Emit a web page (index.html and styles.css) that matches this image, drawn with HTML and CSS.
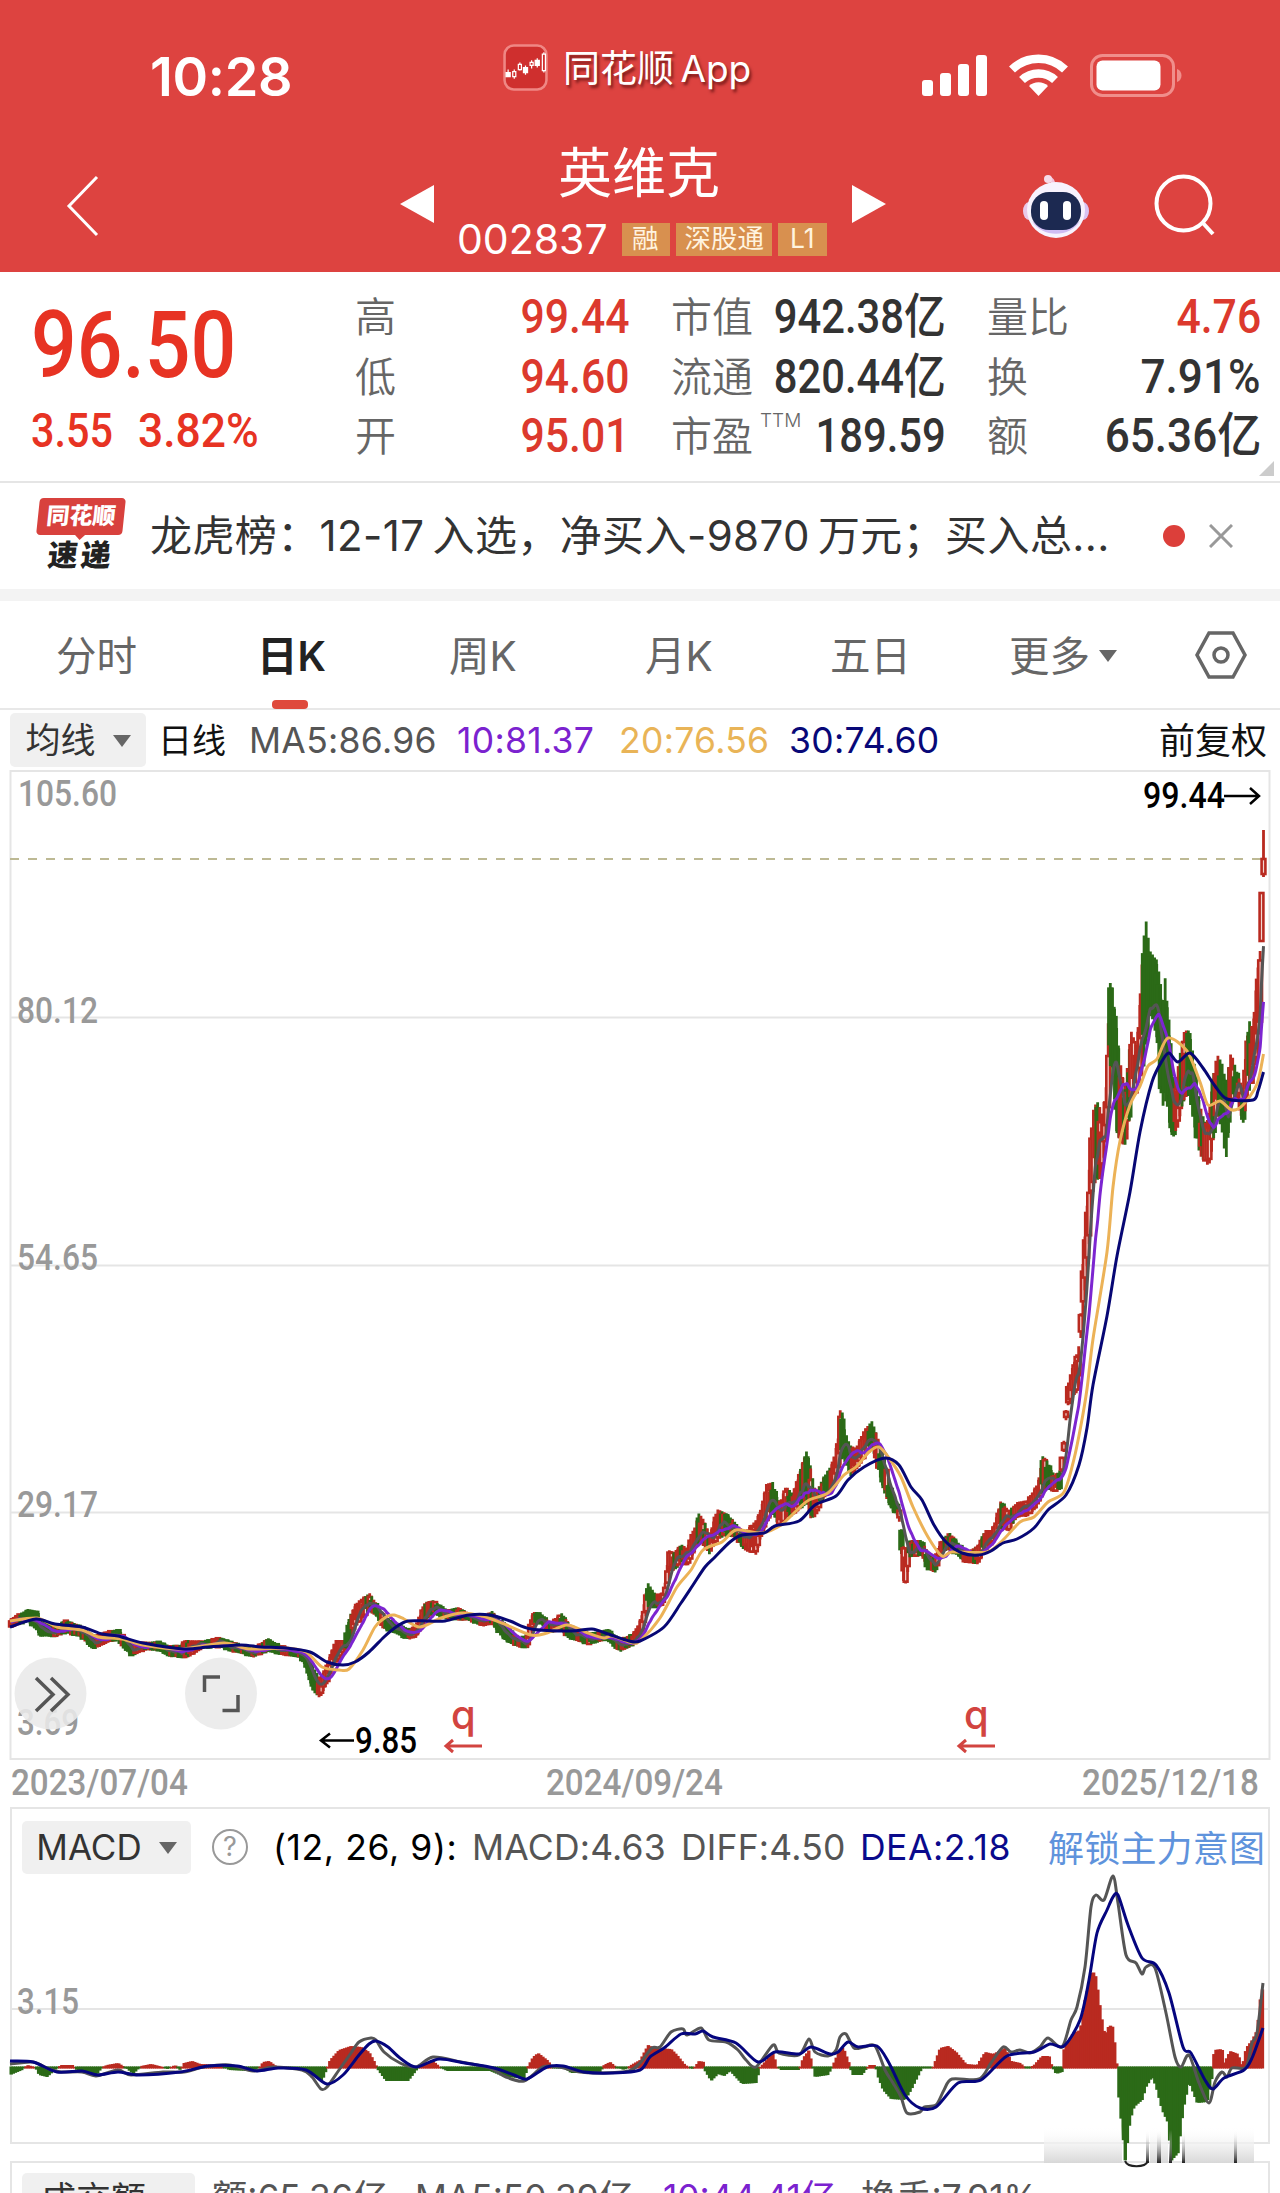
FILE: index.html
```html
<!DOCTYPE html>
<html lang="zh-CN">
<head>
  <meta charset="UTF-8">
  <title>英维克 002837</title>
  <link rel="stylesheet" href="styles.css">
</head>
<body>
  <header class="header">
    <div class="statusbar">
      <div class="time">10:28</div>
      <div class="app">
        <svg class="app-icon" viewBox="0 0 44 46">
          <rect x="1.5" y="1.5" width="41" height="43" rx="9" fill="#cf2f2e" stroke="#ef8784" stroke-width="2.5"/>
          <g stroke="#fff" stroke-width="1.2">
            <path d="M5 25v7M11 25v9M16.500 18v8M22 21v9M28 16v8M33.500 14v9M40 8v20"/>
            <path fill="#fff" d="M3 28h4v4h-4zM20 23h4v5h-4zM31.500 16h4v5h-4z"/>
            <path fill="#cf2f2e" d="M9.500 27h3v5h-3zM15 20h3v5h-3zM26.500 18h3v3h-3zM38.500 10h3v16h-3z"/>
          </g>
        </svg>
        <span>同花顺 App</span>
      </div>
      <svg class="phone-icons" viewBox="0 0 262 46" fill="#fff">
        <rect x="0" y="26" width="11" height="16" rx="3"/>
        <rect x="18" y="19" width="11" height="23" rx="3"/>
        <rect x="36" y="10" width="11" height="32" rx="3"/>
        <rect x="54" y="1" width="11" height="41" rx="3"/>
        <g fill="none" stroke="#fff" stroke-width="8.500">
          <path d="M90 15.500a38 38 0 0 1 53 0"/>
          <path d="M100 26a24 24 0 0 1 33 0"/>
        </g>
        <path d="M107 32a14 14 0 0 1 19 0l-9.500 10z"/>
        <rect x="169.500" y="1.500" width="82" height="40" rx="11" fill="none" stroke="#f08e8b" stroke-width="3"/>
        <rect x="174.500" y="6.500" width="64" height="30" rx="6"/>
        <path d="M255 15c6 2 6 11 0 13z" fill="#f08e8b"/>
      </svg>
    </div>
    <div class="nav">
      <svg class="back" viewBox="0 0 34 62"><path d="M31 2 3 31 31 60" fill="none" stroke="#fff" stroke-width="3"/></svg>
      <svg class="prev" viewBox="0 0 34 38"><path d="M34 0v38L0 19z" fill="#fff"/></svg>
      <div class="stock">
        <div class="name">英维克</div>
        <div class="code"><b>002837</b><i>融</i><i>深股通</i><i>L1</i></div>
      </div>
      <svg class="next" viewBox="0 0 34 38"><path d="M0 0v38L34 19z" fill="#fff"/></svg>
      <svg class="robot" viewBox="0 0 66 64">
        <path d="M30 12C31 5 26 4 25 5" fill="none" stroke="#f3c3dc" stroke-width="4"/>
        <circle cx="25" cy="5" r="4" fill="#f6dbe9"/>
        <ellipse cx="6" cy="37" rx="6" ry="9" fill="#e9c9ea"/>
        <ellipse cx="60" cy="37" rx="6" ry="9" fill="#d9c2f2"/>
        <ellipse cx="33" cy="36" rx="29" ry="28" fill="#f7f2fd"/>
        <path d="M9 47c10 17 38 17 48 0-10 10-38 10-48 0z" fill="#cfbcf3"/>
        <rect x="8" y="18" width="50" height="38" rx="18" fill="#1c2951"/>
        <rect x="17" y="27" width="8" height="19" rx="4" fill="#fff"/>
        <rect x="40" y="27" width="8" height="19" rx="4" fill="#fff"/>
      </svg>
      <svg class="search" viewBox="0 0 62 62" fill="none" stroke="#fff" stroke-width="4">
        <circle cx="29.500" cy="29.500" r="27"/><path d="m48 48 11 12"/>
      </svg>
    </div>
  </header>

  <section class="quote">
    <div class="price">
      <div class="last din">96.50</div>
      <div class="change"><span class="din">3.55</span><span class="din">3.82%</span></div>
    </div>
    <dl class="facts facts-a">
      <dt>高</dt><dd class="up"><span class="din">99.44</span></dd>
      <dt>低</dt><dd class="up"><span class="din">94.60</span></dd>
      <dt>开</dt><dd class="up"><span class="din">95.01</span></dd>
    </dl>
    <dl class="facts facts-b">
      <dt>市值</dt><dd><span class="din long">942.38亿</span></dd>
      <dt>流通</dt><dd><span class="din long">820.44亿</span></dd>
      <dt>市盈<sup>TTM</sup></dt><dd><span class="din long">189.59</span></dd>
    </dl>
    <dl class="facts facts-c">
      <dt>量比</dt><dd class="up"><span class="din">4.76</span></dd>
      <dt>换</dt><dd><span class="din wide">7.91%</span></dd>
      <dt>额</dt><dd><span class="din wide">65.36亿</span></dd>
    </dl>
    <span class="corner"></span>
  </section>

  <section class="news">
    <div class="news-logo"><span class="logo-top">同花顺</span><span class="logo-bottom">速递</span></div>
    <p>龙虎榜：<span>12-17</span>&thinsp;入选，净买入<span>-9870</span>&thinsp;万元；买入总...</p>
    <span class="dot"></span>
    <svg class="close" viewBox="0 0 24 24"><path d="m1 1 22 22M23 1 1 23" stroke="#999" stroke-width="3"/></svg>
  </section>

  <nav class="tabs">
    <span>分时</span>
    <span class="active">日K</span>
    <span>周K</span>
    <span>月K</span>
    <span>五日</span>
    <span>更多<i class="caret"></i></span>
    <svg class="gear" viewBox="0 0 52 48" fill="none" stroke="#666" stroke-width="3.500">
      <path d="M14 2h24l12 22-12 22H14L2 24z"/><circle cx="26" cy="24" r="7"/>
    </svg>
  </nav>

  <div class="ma-row">
    <button>均线<i class="caret"></i></button>
    <span class="cjk">日线</span>
    <span class="ma5">MA5:86.96</span>
    <span class="ma10">10:81.37</span>
    <span class="ma20">20:76.56</span>
    <span class="ma30">30:74.60</span>
    <span class="cjk adjust">前复权</span>
  </div>

  <svg class="kline" viewBox="0 770 1280 991">
    <g class="grid">
      <rect x="10.500" y="771" width="1259" height="988"/>
      <path d="M11 1017.500h1258M11 1265.500h1258M11 1512.500h1258"/>
    </g>
    <path class="last-line" d="M10 859h1260"/>
    <g class="axis">
      <text x="18" y="806" textLength="99" lengthAdjust="spacingAndGlyphs">105.60</text>
      <text x="17" y="1023" textLength="81" lengthAdjust="spacingAndGlyphs">80.12</text>
      <text x="17" y="1270" textLength="81" lengthAdjust="spacingAndGlyphs">54.65</text>
      <text x="17" y="1517" textLength="81" lengthAdjust="spacingAndGlyphs">29.17</text>
      <text x="17" y="1735" textLength="62" lengthAdjust="spacingAndGlyphs">3.69</text>
    </g>
    <g id="candles"></g>
    <g class="extreme">
      <text x="1143" y="808" textLength="82" lengthAdjust="spacingAndGlyphs">99.44</text>
      <text x="355" y="1753" textLength="62" lengthAdjust="spacingAndGlyphs">9.85</text>
      <path d="M1224 796h35m-9-8 9 8-9 8M354 1740.500h-33m9-7-9 7 9 7"/>
    </g>
    <g class="event">
      <text x="451" y="1729">q</text>
      <text x="964" y="1729">q</text>
      <path d="M482 1746h-36m7-6-7 6 7 6M995 1746h-36m7-6-7 6 7 6"/>
    </g>
    <g class="tool">
      <circle cx="50.500" cy="1693.500" r="36"/>
      <circle cx="221" cy="1693.500" r="36"/>
      <path d="m36 1678 17 16.500-17 16.500M51 1678l17 16.500-17 16.500M204.500 1692v-15H220M238 1695v15.500h-15.500"/>
    </g>
  </svg>

  <div class="dates"><span class="din">2023/07/04</span><span class="din">2024/09/24</span><span class="din">2025/12/18</span></div>

  <section class="macd">
    <div class="macd-row">
      <button>MACD<i class="caret"></i></button>
      <span class="help">?</span>
      <span class="params">(12, 26, 9):</span>
      <span>MACD:4.63</span>
      <span>DIFF:4.50</span>
      <span class="dea">DEA:2.18</span>
      <a class="unlock">解锁主力意图</a>
    </div>
    <svg viewBox="0 1879 1280 290">
      <defs>
        <linearGradient id="fade" x1="0" y1="0" x2="0" y2="1">
          <stop offset="0" stop-color="#fff" stop-opacity="0"/>
          <stop offset="0.5" stop-color="#f0f0f0" stop-opacity="0.8"/>
          <stop offset="1" stop-color="#d8d8d8"/>
        </linearGradient>
        <linearGradient id="streak" x1="0" y1="0" x2="0" y2="1">
          <stop offset="0" stop-color="#fff" stop-opacity="0"/>
          <stop offset="1" stop-color="#222"/>
        </linearGradient>
      </defs>
      <path class="grid" d="M11 2009h1258"/>
      <text class="axis" x="17" y="2014" textLength="62" lengthAdjust="spacingAndGlyphs">3.15</text>
      <g id="macd"></g>
      <g class="smear">
        <rect x="1044" y="2126" width="78" height="37" fill="url(#fade)"/>
        <rect x="1150" y="2126" width="18" height="37" fill="url(#fade)"/>
        <rect x="1184" y="2126" width="70" height="37" fill="url(#fade)"/>
        <path fill="url(#streak)" d="M1146 2130h3v33h-3zM1157 2130h4v33h-4zM1169 2130h3v33h-3zM1182 2130h3v33h-3zM1234 2130h3v33h-3z"/>
        <path d="M1125 2161c3 7 20 7 23 0" fill="none" stroke="#222" stroke-width="2"/>
      </g>
    </svg>
  </section>

  <section class="volume">
    <button>成交额<i class="caret"></i></button>
    <span>额:65.36亿</span>
    <span>MA5:50.39亿</span>
    <span class="ma10">10:44.41亿</span>
    <span>换手:7.91%</span>
  </section>

  <script src="chart.js"></script>
</body>
</html>
```
FILE: styles.css
```css
* {
  box-sizing: border-box;
}
body {
  margin: 0;
  width: 1280px;
  height: 2193px;
  overflow: hidden;
  background: #fff;
  color: #333;
  font-family: Inter, "Noto Sans CJK SC", sans-serif;
}
svg {
  display: block;
}
button {
  border: none;
  padding: 0;
  background: #f0f0f0;
  border-radius: 5px;
  color: #333;
  font: 35px/52px Inter, "Noto Sans CJK SC", sans-serif;
}

/* narrow numerals */
.din {
  display: inline-block;
  font-family: Roboto, "Noto Sans CJK SC", sans-serif;
  transform: scaleX(0.89);
  transform-origin: left;
  white-space: nowrap;
}
.caret {
  display: inline-block;
  border: 9px solid transparent;
  border-top: 12px solid #666;
  border-bottom: none;
  vertical-align: middle;
}

/* Header */
.header {
  height: 272px;
  background: #dd4340;
  color: #fff;
}
.statusbar {
  display: flex;
  height: 120px;
  padding-top: 44px;
}
.time {
  width: 353px;
  margin-left: 150px;
  font-size: 54px;
  font-weight: 600;
  line-height: 66px;
  letter-spacing: -0.3px;
}
.app {
  display: flex;
  width: 419px;
  gap: 15px;
  font-size: 37px;
  line-height: 49px;
  word-spacing: -4px;
  text-shadow: 2px 3px 3px rgba(60, 0, 0, 0.6);
}
.app-icon {
  width: 45px;
  height: 47px;
}
.phone-icons {
  width: 262px;
  height: 46px;
  margin-top: 10px;
}
.nav {
  display: flex;
  height: 152px;
}
.back {
  width: 34px;
  height: 62px;
  margin: 55px 0 0 66px;
}
.prev, .next {
  width: 34px;
  height: 38px;
  margin-top: 65px;
}
.prev {
  margin-left: 300px;
}
.stock {
  width: 418px;
}
.name {
  margin-top: 18px;
  text-align: center;
  font-size: 54px;
  line-height: 72px;
  padding-right: 8px;
}
.code {
  display: flex;
  margin: 10px 0 0 23px;
  gap: 6px;
  height: 40px;
}
.code b {
  width: 159px;
  font-size: 41px;
  font-weight: 400;
  line-height: 38px;
}
.code i {
  height: 33px;
  margin-top: 3px;
  padding: 0 8px 0 9px;
  background: #d8904f;
  color: #fff3df;
  font-style: normal;
  font-size: 26.500px;
  line-height: 31px;
}
.code i:first-of-type {
  padding: 0 11px 0 10px;
}
.code i:last-child {
  padding: 0 12px;
}
.robot {
  width: 66px;
  height: 64px;
  margin: 54px 65px 0 137px;
}
.search {
  width: 62px;
  height: 62px;
  margin-top: 54px;
}

/* Quote panel */
.quote {
  position: relative;
  display: flex;
  height: 211px;
  padding-top: 15px;
  border-bottom: 2px solid #e5e5e5;
}
.price {
  width: 355px;
  padding: 9px 0 0 31px;
  color: #e73323;
  font-weight: 500;
}
.last {
  font-size: 93px;
  line-height: 100px;
  transform: scaleX(0.865);
}
.change {
  display: grid;
  grid-template-columns: 107px 1fr;
  margin-top: 6px;
  font-size: 48px;
  line-height: 58px;
}
.change .din:first-child {
  transform: scaleX(0.86);
}
.change .din:last-child {
  transform: scaleX(0.925);
}
.facts {
  display: grid;
  grid-template-rows: repeat(3, 59.5px);
  margin: 0;
  font-size: 41px;
  line-height: 60px;
}
.facts-a {
  grid-template-columns: 80px 194px;
  width: 316px;
}
.facts-b {
  grid-template-columns: 92px 183px;
  width: 316px;
}
.facts-c {
  grid-template-columns: 92px 182px;
}
.facts dt {
  color: #666;
  white-space: nowrap;
  font-weight: 350;
}
.facts sup {
  margin-left: 7px;
  font-size: 19px;
  line-height: 0;
  vertical-align: 24px;
}
.facts dd {
  margin: 0;
  text-align: right;
  font-size: 48px;
  font-weight: 500;
}
.facts .din {
  transform-origin: right;
  float: right;
}
.facts .long {
  transform: scaleX(0.87);
}
.facts .wide {
  transform: scaleX(0.92);
}
.up {
  color: #dc392d;
}
.corner {
  position: absolute;
  right: 6px;
  bottom: 5px;
  border-left: 15px solid transparent;
  border-bottom: 15px solid #ccc;
}

/* News strip */
.news {
  display: flex;
  align-items: center;
  height: 118px;
  border-bottom: 12px solid #f3f3f3;
}
.news-logo {
  width: 86px;
  margin-left: 38px;
  font-weight: 900;
}
.news-logo span {
  display: block;
  position: relative;
  transform: skewX(-6deg);
  text-align: center;
}
.logo-top {
  height: 37px;
  border-radius: 4px;
  background: #d8413d;
  color: #fff;
  font-size: 23px;
  line-height: 37px;
}
.logo-top::after {
  content: "";
  position: absolute;
  left: 38px;
  top: 36px;
  border: 6px solid transparent;
  border-top-color: #d8413d;
}
.logo-bottom {
  font-size: 30px;
  line-height: 40px;
  letter-spacing: 3px;
  color: #222;
}
.news p {
  width: 1013px;
  margin: -8px 0 0 26px;
  font-size: 42px;
  letter-spacing: 0.4px;
  white-space: nowrap;
}
.dot {
  width: 22px;
  height: 22px;
  border-radius: 50%;
  background: #dc3f3a;
}
.close {
  width: 24px;
  height: 24px;
  margin-left: 24px;
}

/* Period tabs */
.tabs {
  display: grid;
  grid-template-columns: 201px 192px 196px 185px 179px 186px 1fr;
  align-items: center;
  height: 109px;
  padding-left: 56px;
  border-bottom: 2px solid #e8e8e8;
  color: #666;
  font-size: 40.500px;
}
.tabs span {
  margin-top: -2px;
}
.tabs .active {
  position: relative;
  color: #222;
  font-weight: 600;
}
.tabs .active::after {
  content: "";
  position: absolute;
  left: 15px;
  bottom: -26px;
  width: 36px;
  height: 9px;
  border-radius: 4px;
  background: #df4a3c;
}
.tabs .caret {
  margin: -8px 0 0 9px;
}
.gear {
  width: 52px;
  height: 48px;
}

/* Moving average legend */
.ma-row {
  display: grid;
  grid-template-columns: 148px 91px 208px 162px 170px 370px 1fr;
  align-items: center;
  height: 60px;
  padding-left: 10px;
  color: #555;
  font-size: 35.500px;
  letter-spacing: 0.3px;
}
.ma-row button {
  width: 136px;
  height: 54px;
}
.ma-row .caret, .macd-row .caret {
  margin: -4px 0 0 17px;
}
.ma-row .cjk {
  margin-top: -4px;
  color: #111;
  font-size: 34px;
  letter-spacing: 0;
}
.ma-row .adjust {
  font-size: 36px;
}
.ma-row .ma10, .ma10 {
  color: #7b22cf;
}
.ma20 {
  color: #e9b457;
}
.ma30 {
  color: #080878;
}

/* Charts */
.kline {
  width: 1280px;
  height: 991px;
}
.grid {
  fill: none;
  stroke: #e5e5e5;
  stroke-width: 2;
}
.last-line {
  stroke: #bdb994;
  stroke-width: 2;
  stroke-dasharray: 9 9;
}
.axis {
  fill: #999;
  font: 500 36px Roboto, sans-serif;
}
.extreme text {
  font: 500 36px Roboto, sans-serif;
}
.extreme path {
  fill: none;
  stroke: #000;
  stroke-width: 2.5;
}
.event {
  fill: #d24440;
  font: 500 40px Inter, sans-serif;
}
.event path {
  fill: none;
  stroke: #d24440;
  stroke-width: 3;
}
.tool circle {
  fill: #e9e9e9;
  fill-opacity: 0.88;
}
.tool path {
  fill: none;
  stroke: #555;
  stroke-width: 3.5;
}
.line {
  fill: none;
  stroke-width: 3;
  stroke-linejoin: round;
}

.dates {
  display: grid;
  grid-template-columns: 535px 536px 1fr;
  height: 46px;
  padding-left: 11px;
  color: #999;
  font-size: 36px;
  font-weight: 500;
  line-height: 44px;
}
.dates .din {
  width: 190px;
  transform: scaleX(0.922);
}

.macd {
  height: 337px;
  margin: 0 10px;
  border: 2px solid #e5e5e5;
}
.macd-row {
  display: grid;
  grid-template-columns: 190px 61px 199px 209px 179px 188px 1fr;
  align-items: center;
  height: 70px;
  padding: 6px 0 0 10px;
  color: #555;
  font-size: 35.500px;
  letter-spacing: 0.2px;
  white-space: nowrap;
}
.macd-row button {
  width: 169px;
  height: 53px;
}
.help {
  width: 36px;
  height: 36px;
  border: 2px solid #999;
  border-radius: 50%;
  color: #999;
  font-size: 27px;
  line-height: 32px;
  text-align: center;
}
.params {
  color: #000;
  letter-spacing: 0.6px;
}
.dea {
  color: #0a0a8c;
  letter-spacing: 0.5px;
}
.unlock {
  margin-top: -3px;
  color: #5f93dc;
  font-size: 36px;
}
/* the plot spans the page, its tallest bars and peak run past the frame */
.macd > svg {
  position: relative;
  width: 1280px;
  height: 290px;
  margin-left: -12px;
  overflow: visible;
}

.volume {
  display: grid;
  grid-template-columns: 190px 203px 248px 198px 1fr;
  height: 60px;
  margin: 17px 10px 0;
  padding: 10px 0 0 10px;
  border: 2px solid #e5e5e5;
  color: #555;
  font-size: 35.300px;
  line-height: 50px;
  white-space: nowrap;
}
.volume button {
  width: 173px;
}
.volume .caret {
  margin: 0 0 0 12px;
}
```
FILE: chart.js
```js
const RED = "#b92a20";
const GREEN = "#2b6a17";
const STEP = 2.11;

// x, highest, lowest of the candles around it
const range = [
  [10,1619,1628],[28,1609,1622],[38,1611,1632],[40,1620,1637],[55,1625,1637],[66,1620,1633],[80,1625,1637],[94,1635,1650],
  [108,1631,1643],[118,1629,1640],[131,1643,1656],[145,1642,1650],[160,1641,1652],[168,1645,1657],[180,1645,1658],[186,1640,1659],
  [205,1641,1648],[220,1637,1648],[235,1643,1652],[253,1648,1658],[268,1638,1652],[280,1645,1655],[300,1650,1658],[306,1653,1667],
  [312,1665,1690],[320,1678,1699],[326,1668,1686],[335,1640,1664],[345,1640,1652],[350,1615,1640],[358,1601,1625],[370,1593,1612],
  [378,1607,1618],[385,1617,1630],[400,1624,1636],[410,1630,1640],[418,1622,1635],[425,1602,1620],[434,1600,1614],[445,1610,1619],
  [459,1607,1620],[470,1615,1620],[483,1618,1627],[492,1611,1624],[500,1620,1635],[506,1625,1642],[520,1640,1648],[528,1632,1648],
  [533,1612,1630],[538,1612,1622],[550,1622,1632],[562,1613,1632],[570,1625,1640],[590,1633,1645],[608,1629,1640],[620,1640,1652],
  [635,1632,1645],[642,1615,1637],[648,1583,1607],[656,1595,1608],[664,1592,1606],[669,1550,1572],[675,1553,1571],[681,1544,1563],
  [687,1548,1566],[693,1533,1555],[699,1513,1545],[704,1520,1547],[710,1535,1555],[717,1509,1540],[726,1513,1537],[736,1523,1538],
  [744,1533,1551],[756,1520,1555],[761,1510,1537],[766,1484,1525],[773,1482,1515],[779,1505,1527],[786,1486,1520],[794,1495,1515],
  [802,1464,1510],[807,1450,1497],[811,1470,1520],[816,1493,1518],[822,1480,1500],[832,1464,1492],[838,1440,1480],[841,1400,1462],
  [844,1428,1457],[850,1445,1478],[856,1448,1472],[864,1430,1460],[872,1421,1447],[877,1435,1465],[885,1460,1497],[893,1497,1512],
  [899,1505,1517],[903,1545,1580],[906,1552,1585],[910,1540,1557],[922,1540,1556],[928,1553,1570],[935,1556,1573],[942,1540,1553],
  [949,1532,1550],[956,1540,1555],[966,1552,1563],[979,1545,1565],[985,1530,1550],[993,1530,1545],[1001,1500,1530],[1009,1513,1532],
  [1017,1502,1517],[1028,1500,1517],[1038,1483,1507],[1043,1455,1495],[1048,1462,1490],[1054,1477,1492],[1060,1470,1490],[1064,1440,1451],
  [1067,1395,1405],[1069,1378,1407],[1075,1360,1394],[1079,1345,1390],[1081,1309,1332],[1083,1261,1316],[1086,1224,1279],[1089,1174,1247],
  [1092,1114,1210],[1095,1105,1170],[1098,1102,1183],[1102,1114,1178],[1106,1090,1141],[1108,1027,1137],[1111,970,1050],[1113,995,1076],
  [1116,1022,1130],[1120,1060,1146],[1125,1090,1148],[1128,1060,1137],[1132,1027,1095],[1136,1054,1095],[1140,1003,1077],[1143,944,1077],
  [1146,920,1050],[1150,951,1017],[1155,958,1022],[1159,972,1063],[1162,1013,1116],[1165,976,1095],[1169,1031,1123],[1173,1077,1139],
  [1178,1077,1128],[1183,1033,1105],[1188,1029,1095],[1192,1045,1114],[1197,1091,1141],[1200,1105,1157],[1205,1123,1162],[1209,1118,1169],
  [1213,1077,1146],[1217,1054,1114],[1222,1063,1132],[1226,1082,1164],[1231,1052,1105],[1237,1072,1100],[1243,1091,1125],[1246,1050,1109],
  [1249,1020,1095],[1253,1029,1082],[1257,976,1063],[1260,951,1036]
];

// falling days at the two tops and the dips after them
const falling = [[1109,1119],[1144,1150],[1152,1160],[1164,1171],[1187,1199],[1221,1227]];

const ma20 = "10,1621 37,1618 57,1627 82,1630 98,1637 122,1639 143,1645 180,1649 224,1643 249,1649 286,1648 306,1652 322,1667 339,1670 349,1669 363,1650 375,1627 386,1617 394,1615 404,1619 420,1627 441,1618 461,1613 482,1616 502,1623 531,1635 547,1633 567,1625 588,1633 604,1638 612,1636 633,1643 641,1640 660,1618 677,1587 691,1570 703,1550 722,1542 736,1530 762,1533 781,1525 797,1510 809,1500 828,1493 844,1475 856,1467 869,1452 879,1447 889,1458 901,1477 913,1507 928,1537 942,1556 952,1552 987,1552 1003,1540 1020,1522 1034,1517 1048,1502 1064,1492 1074,1459 1081,1425 1087,1389 1093,1339 1107,1252 1113,1187 1120,1141 1130,1105 1140,1086 1148,1066 1157,1059 1168,1038 1187,1051 1200,1082 1208,1105 1220,1101 1232,1110 1243,1105 1257,1084 1263.5,1054";
const ma30 = "10,1627 36,1619 55,1624 82,1627 102,1634 118,1636 143,1643 184,1649 208,1647 241,1645 261,1647 286,1648 310,1652 327,1662 343,1665 355,1662 369,1652 384,1637 396,1627 408,1621 428,1621 445,1621 469,1615 490,1615 510,1621 531,1629 571,1631 592,1629 608,1634 629,1641 640,1641 664,1627 681,1603 693,1585 705,1567 715,1557 730,1542 742,1535 764,1533 775,1526 799,1521 815,1505 836,1496 848,1480 864,1467 885,1458 899,1465 911,1487 922,1500 934,1525 946,1542 962,1553 979,1555 991,1551 1003,1543 1017,1539 1034,1528 1048,1510 1066,1495 1079,1465 1087,1428 1093,1385 1107,1316 1117,1256 1130,1192 1140,1132 1152,1082 1162,1061 1169,1053 1178,1062 1190,1053 1203,1068 1215,1086 1227,1099 1253,1100 1258,1091 1263.5,1072";

// x, end of the histogram bar
const hist = [
  [10,2075],[22,2070],[27,2065],[35,2067],[39,2075],[47,2077],[57,2068],[61,2065],[73,2065],[78,2072],[96,2076],[102,2067],
  [107,2065],[118,2063],[126,2068],[133,2074],[141,2066],[151,2064],[163,2067],[167,2069],[175,2065],[180,2070],[184,2063],[192,2061],
  [200,2064],[220,2065],[229,2070],[249,2071],[259,2068],[263,2062],[269,2061],[277,2067],[302,2068],[312,2073],[322,2081],[327,2068],
  [330,2060],[339,2050],[351,2046],[361,2047],[369,2052],[375,2063],[378,2070],[386,2081],[408,2081],[418,2068],[422,2063],[433,2061],
  [441,2068],[447,2071],[490,2071],[502,2076],[524,2079],[528,2066],[533,2057],[538,2053],[547,2060],[553,2067],[563,2067],[571,2073],
  [600,2073],[604,2065],[610,2062],[616,2067],[624,2070],[631,2065],[640,2060],[648,2045],[654,2048],[671,2049],[677,2055],[685,2065],
  [693,2069],[699,2061],[704,2062],[705,2071],[711,2081],[718,2074],[724,2076],[730,2071],[742,2084],[756,2083],[760,2067],[773,2053],
  [777,2067],[781,2070],[799,2070],[803,2058],[809,2050],[812,2065],[815,2077],[828,2075],[832,2067],[838,2053],[843,2047],[849,2063],
  [852,2075],[862,2075],[869,2065],[875,2065],[878,2077],[883,2090],[891,2099],[905,2100],[911,2090],[922,2068],[933,2067],[940,2048],
  [948,2046],[956,2052],[966,2064],[977,2065],[985,2052],[993,2054],[1005,2048],[1011,2061],[1020,2063],[1027,2069],[1034,2065],[1042,2056],
  [1049,2056],[1052,2067],[1056,2074],[1062,2072],[1064,2048],[1073,2033],[1080,2030],[1085,2000],[1092,1970],[1096,1977],[1099,2000],[1103,2027],
  [1105,2035],[1109,2025],[1113,2027],[1117,2067],[1118,2090],[1121,2120],[1125,2161],[1130,2120],[1134,2107],[1142,2100],[1146,2087],[1152,2077],
  [1156,2087],[1162,2110],[1168,2123],[1171,2161],[1178,2153],[1183,2110],[1189,2082],[1197,2103],[1207,2102],[1212,2077],[1214,2050],[1222,2049],
  [1224,2063],[1230,2051],[1238,2054],[1242,2067],[1246,2048],[1252,2040],[1257,2030],[1260,2000],[1264,1981]
];
const diff = "10,2064 33,2062 49,2069 61,2072 82,2072 96,2076 118,2070 131,2075 163,2072 184,2072 204,2067 229,2065 253,2071 273,2067 302,2070 312,2077 321,2089 327,2087 339,2070 351,2053 359,2042 371,2038 376,2040 384,2052 400,2063 416,2067 433,2057 461,2062 490,2068 506,2077 524,2081 543,2067 559,2067 580,2072 600,2073 629,2071 640,2063 652,2048 660,2047 671,2032 683,2029 687,2035 701,2028 709,2040 726,2042 738,2050 746,2060 756,2067 773,2045 779,2053 799,2055 809,2039 815,2052 828,2056 836,2050 840,2037 846,2034 854,2048 864,2047 875,2046 885,2070 893,2083 901,2097 907,2113 920,2112 924,2107 936,2105 944,2090 952,2079 979,2079 991,2063 1003,2047 1011,2052 1020,2050 1030,2053 1040,2047 1048,2038 1062,2047 1071,2020 1077,2007 1085,1967 1091,1907 1096,1895 1104,1900 1113,1876 1118,1903 1126,1955 1136,1963 1142,1974 1146,1967 1155,1968 1166,2013 1175,2057 1181,2067 1189,2055 1199,2083 1209,2103 1215,2082 1222,2072 1227,2077 1232,2068 1246,2067 1252,2043 1257,2033 1263,1983";
const dea = "10,2061 33,2062 57,2072 82,2071 98,2075 118,2072 139,2075 180,2072 208,2066 237,2066 257,2071 278,2068 306,2070 327,2084 343,2075 359,2055 369,2044 376,2041 388,2047 400,2058 416,2067 439,2059 465,2063 494,2068 514,2075 527,2079 547,2067 563,2066 584,2072 612,2073 640,2070 650,2057 664,2048 681,2034 695,2034 703,2031 713,2037 736,2043 758,2062 775,2052 799,2054 811,2047 830,2054 838,2052 848,2042 858,2047 877,2046 889,2063 905,2095 920,2108 936,2107 958,2083 981,2080 1007,2056 1034,2052 1050,2044 1064,2046 1080,2020 1089,1980 1097,1933 1107,1910 1113,1897 1118,1895 1128,1925 1142,1958 1156,1965 1169,1993 1183,2047 1191,2053 1205,2080 1213,2089 1224,2078 1244,2070 1252,2058 1263,2028";

let seed = 7;
function rand() {
  seed = (seed * 16807) % 2147483647;
  return seed / 2147483647;
}

// linear interpolation of column col at x
function at(points, x, col) {
  let i = 1;
  while (i < points.length - 1 && points[i][0] < x) i++;
  const a = points[i - 1], b = points[i];
  const t = Math.max(0, Math.min(1, (x - a[0]) / (b[0] - a[0])));
  return a[col] + (b[col] - a[col]) * t;
}

// smooth line through the points
function line(points, color) {
  const p = points.split(" ").map(s => s.split(",").map(Number));
  let d = `M${p[0]}`;
  for (let i = 0; i < p.length - 1; i++) {
    const a = p[i - 1] || p[i], b = p[i], c = p[i + 1], e = p[i + 2] || c;
    const k = 7;
    d += `C${b[0] + (c[0] - a[0]) / k} ${b[1] + (c[1] - a[1]) / k} ${c[0] - (e[0] - b[0]) / k} ${c[1] - (e[1] - b[1]) / k} ${c[0]} ${c[1]}`;
  }
  return `<path class="line" stroke="${color}" d="${d}"/>`;
}

function candle(x, high, low, top, bottom, up) {
  const color = up ? RED : GREEN;
  return `<path d="M${x} ${high}V${top}M${x} ${bottom}V${low}" stroke="${color}" stroke-width="2.8"/>` +
    `<rect x="${x - 1.9}" y="${top}" width="3.8" height="${bottom - top}" fill="${up ? "#f3d5d0" : color}" stroke="${color}" stroke-width="2.6"/>`;
}

function average(closes, n) {
  return closes.map((c, i) => {
    const part = closes.slice(Math.max(0, i - n + 1), i + 1);
    return c[0].toFixed(1) + "," + (part.reduce((s, p) => s + p[1], 0) / part.length).toFixed(1);
  }).join(" ");
}

function drawCandles() {
  let out = "";
  const closes = [];
  for (let x = 11; x < 1260.5; x += STEP) {
    const high = at(range, x, 1), low = at(range, x, 2);
    const slope = at(range, x + 5, 1) + at(range, x + 5, 2) - at(range, x - 3, 1) - at(range, x - 3, 2);
    let up = rand() < (slope < -3 ? 0.82 : slope > 3 ? 0.2 : 0.48);
    if (falling.some(f => x >= f[0] && x <= f[1])) up = false;
    if (x > 1080 && x < 1096) up = true;
    const h = low - high;
    const top = high + h * (0.05 + rand() * 0.3);
    const bottom = low - h * (0.05 + rand() * 0.3);
    out += candle(x, high, low - h * rand() * 0.05, top, bottom, up);
    closes.push([x, up ? top + h * 0.1 : bottom - h * 0.1]);
  }
  out += candle(1261.5, 892, 942, 893, 941, true);
  out += candle(1263.5, 830, 877, 859, 874, true);
  closes.push([1261.5, 893], [1263.5, 859]);
  out += line(average(closes, 5), "#555") + line(average(closes, 10), "#7c25d0");
  out += line(ma20, "#ecb257") + line(ma30, "#070774");
  document.getElementById("candles").innerHTML = out;
}

function drawMacd() {
  let out = "";
  for (let x = 11; x < 1264; x += STEP) {
    const y = at(hist, x, 1);
    const up = y < 2067;
    out += up
      ? `<rect x="${x - 1.5}" y="${y}" width="3.4" height="${2068.5 - y}" fill="${RED}"/>`
      : `<rect x="${x - 1.5}" y="2066.5" width="3.4" height="${Math.max(2, y - 2066.5)}" fill="${GREEN}"/>`;
  }
  out += line(diff, "#555") + line(dea, "#05057e");
  document.getElementById("macd").innerHTML = out;
}

drawCandles();
drawMacd();
```
